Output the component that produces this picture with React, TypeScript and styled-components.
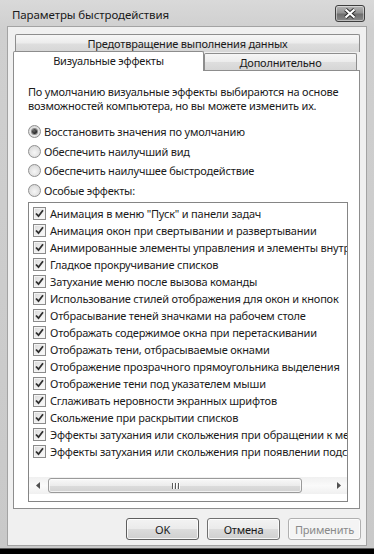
import * as React from 'react';
import styled, { createGlobalStyle } from 'styled-components';

const GlobalStyle = createGlobalStyle`
  html, body {
    margin: 0;
    padding: 0;
    background: #000;
  }
  body {
    font-family: "Noto Sans", "DejaVu Sans", sans-serif;
    font-size: 11px;
    letter-spacing: -0.2px;
    color: #1b1b1b;
  }
`;

const Window = styled.div`
  width: 374px;
  height: 549px;
  box-sizing: border-box;
  display: flex;
  flex-direction: column;
  padding: 0 7px 2px;
  background: linear-gradient(to bottom, #d9d9d9 0px, #cfcfcf 30px, #c9c9c9 100%);
  border-bottom: 1px solid #5a5a5a;
`;

const TitleBar = styled.div`
  height: 26px;
  display: flex;
  align-items: center;
  justify-content: space-between;
  padding: 0 2px 0 5px;
`;

const Title = styled.span`
  font-size: 11.5px;
  letter-spacing: -0.1px;
  color: #1a1a1a;
  margin-top: 2px;
`;

const CloseButton = styled.div`
  width: 30px;
  height: 17px;
  box-sizing: border-box;
  margin-top: 1px;
  border: 1px solid #3f3f3f;
  border-radius: 3px;
  display: flex;
  align-items: center;
  justify-content: center;
  background: linear-gradient(to bottom, #b5b5b5 0%, #939393 45%, #6e6e6e 55%, #8a8a8a 100%);
  box-shadow: inset 0 0 0 1px rgba(255, 255, 255, 0.45);
`;

const Client = styled.div`
  flex: 1;
  display: flex;
  flex-direction: column;
  background: #f0f0f0;
  border: 1px solid #a3a3a3;
  padding: 7px 5px 0;
`;

const BackRow = styled.div`
  display: flex;
  padding-left: 2px;
`;

const FrontRow = styled.div`
  display: flex;
  align-items: flex-end;
  height: 19px;
  margin-top: -1px;
`;

const Tab = styled.div<{ $width: number; $active?: boolean; $height: number }>`
  width: ${(p) => p.$width}px;
  height: ${(p) => p.$height}px;
  box-sizing: border-box;
  display: flex;
  align-items: center;
  justify-content: center;
  border: 1px solid #8d8d8d;
  border-bottom: none;
  border-radius: 2px 2px 0 0;
  color: #1a1a1a;
  white-space: nowrap;
  position: relative;
  z-index: ${(p) => (p.$active ? 2 : 0)};
  margin-bottom: ${(p) => (p.$active ? -1 : 0)}px;
  padding-bottom: ${(p) => (p.$active ? 3 : 0)}px;
  background: ${(p) =>
    p.$active
      ? '#ffffff'
      : 'linear-gradient(to bottom, #f6f6f6 0%, #ececec 48%, #dedede 52%, #d6d6d6 100%)'};
`;

const Panel = styled.div`
  width: 347px;
  box-sizing: border-box;
  border: 1px solid #8d8d8d;
  background: #fff;
  padding: 14px 0 6px 14px;
  position: relative;
  z-index: 1;
`;

const Intro = styled.p`
  margin: 0;
  line-height: 14px;
  width: 325px;
`;

const RadioGroup = styled.div`
  margin-top: 9px;
  display: flex;
  flex-direction: column;
`;

const RadioRow = styled.label`
  height: 19.5px;
  display: flex;
  align-items: center;
  gap: 3px;
  white-space: nowrap;
`;

const RadioDot = styled.span<{ $checked?: boolean }>`
  width: 13px;
  height: 13px;
  box-sizing: border-box;
  border-radius: 50%;
  border: 1px solid #909090;
  background: radial-gradient(circle at 50% 60%, #f6f6f6 0%, #e2e2e2 55%, #cfcfcf 100%);
  display: flex;
  align-items: center;
  justify-content: center;
  &::after {
    content: '';
    display: ${(p) => (p.$checked ? 'block' : 'none')};
    width: 5px;
    height: 5px;
    border-radius: 50%;
    background: radial-gradient(circle at 40% 35%, #6a6a6a 0%, #222 70%, #111 100%);
    box-shadow: 0 0 0 1px #8a8a8a;
  }
`;

const ListBox = styled.div`
  margin-top: 2px;
  width: 320px;
  height: 300px;
  box-sizing: border-box;
  border: 1px solid #858585;
  background: #fff;
  display: flex;
  flex-direction: column;
  padding-bottom: 7px;
`;

const ItemList = styled.div`
  flex: 1;
  overflow: hidden;
  padding-top: 2px;
`;

const Item = styled.label`
  height: 17px;
  display: flex;
  align-items: center;
  gap: 4px;
  padding-left: 4px;
  white-space: nowrap;
`;

const Box = styled.span`
  flex: none;
  width: 13px;
  height: 13px;
  box-sizing: border-box;
  border: 1px solid #8b8b8b;
  background: linear-gradient(135deg, #d9d9d9 0%, #f3f3f3 70%, #fbfbfb 100%);
  box-shadow: inset 0 0 0 1px #f4f4f4;
  display: flex;
  align-items: center;
  justify-content: center;
`;

const ScrollBar = styled.div`
  height: 17px;
  display: flex;
  align-items: center;
  background: linear-gradient(to bottom, #f0f0f0, #fafafa 50%, #f0f0f0);
`;

const Arrow = styled.div`
  width: 17px;
  height: 17px;
  flex: none;
  display: flex;
  align-items: center;
  justify-content: center;
`;

const Track = styled.div`
  flex: 1;
  height: 17px;
  display: flex;
  align-items: center;
  padding: 0 2px;
`;

const Thumb = styled.div`
  width: 254px;
  height: 15px;
  box-sizing: border-box;
  border: 1px solid #9a9a9a;
  border-radius: 3px;
  background: linear-gradient(to bottom, #f8f8f8 0%, #ececec 50%, #dcdcdc 51%, #d2d2d2 100%);
  box-shadow: inset 0 0 0 1px rgba(255, 255, 255, 0.7);
  display: flex;
  align-items: center;
  justify-content: center;
  gap: 2px;
`;

const Grip = styled.span`
  width: 1px;
  height: 6px;
  background: #5a5a5a;
  box-shadow: 1px 0 0 #fff;
`;

const ButtonRow = styled.div`
  display: flex;
  justify-content: flex-end;
  gap: 8px;
  margin-top: 9px;
  padding-right: 0;
`;

const Button = styled.div<{ $disabled?: boolean; $default?: boolean }>`
  width: 73px;
  height: 22px;
  box-sizing: border-box;
  display: flex;
  align-items: center;
  justify-content: center;
  border-radius: 3px;
  border: 1px solid ${(p) => (p.$disabled ? '#b0b0b0' : p.$default ? '#5e5e5e' : '#707070')};
  color: ${(p) => (p.$disabled ? '#8a8a8a' : '#1a1a1a')};
  background: ${(p) =>
    p.$disabled
      ? '#f4f4f4'
      : 'linear-gradient(to bottom, #f3f3f3 0%, #ebebeb 48%, #dcdcdc 52%, #cfcfcf 100%)'};
  box-shadow: inset 0 0 0 1px ${(p) => (p.$disabled ? '#fbfbfb' : 'rgba(255,255,255,0.8)')};
`;

const items = [
  'Анимация в меню "Пуск" и панели задач',
  'Анимация окон при свертывании и развертывании',
  'Анимированные элементы управления и элементы внутри окна',
  'Гладкое прокручивание списков',
  'Затухание меню после вызова команды',
  'Использование стилей отображения для окон и кнопок',
  'Отбрасывание теней значками на рабочем столе',
  'Отображать содержимое окна при перетаскивании',
  'Отображать тени, отбрасываемые окнами',
  'Отображение прозрачного прямоугольника выделения',
  'Отображение тени под указателем мыши',
  'Сглаживать неровности экранных шрифтов',
  'Скольжение при раскрытии списков',
  'Эффекты затухания или скольжения при обращении к меню',
  'Эффекты затухания или скольжения при появлении подсказок',
];

const radios = [
  'Восстановить значения по умолчанию',
  'Обеспечить наилучший вид',
  'Обеспечить наилучшее быстродействие',
  'Особые эффекты:',
];

const Check = () => (
  <svg width="9" height="9" viewBox="0 0 9 9">
    <path d="M1 4.5 L3.5 7.2 L8 1.2" fill="none" stroke="#2e2e2e" strokeWidth="1.8" />
  </svg>
);

export default function App() {
  return (
    <>
      <GlobalStyle />
      <Window>
        <TitleBar>
          <Title>Параметры быстродействия</Title>
          <CloseButton>
            <svg width="14" height="11" viewBox="0 0 14 11">
              <path d="M2.5 1.5 L11.5 9.5 M11.5 1.5 L2.5 9.5" stroke="#2a2a2a" strokeWidth="4" />
              <path d="M2.5 1.5 L11.5 9.5 M11.5 1.5 L2.5 9.5" stroke="#ffffff" strokeWidth="2.2" />
            </svg>
          </CloseButton>
        </TitleBar>
        <Client>
          <BackRow>
            <Tab $width={345} $height={18}>Предотвращение выполнения данных</Tab>
          </BackRow>
          <FrontRow>
            <Tab $width={191} $height={20} $active>Визуальные эффекты</Tab>
            <Tab $width={153} $height={17}>Дополнительно</Tab>
          </FrontRow>
          <Panel>
            <Intro>
              По умолчанию визуальные эффекты выбираются на основе возможностей компьютера, но вы можете изменить их.
            </Intro>
            <RadioGroup>
              {radios.map((r, i) => (
                <RadioRow key={r}>
                  <RadioDot $checked={i === 0} />
                  {r}
                </RadioRow>
              ))}
            </RadioGroup>
            <ListBox>
              <ItemList>
                {items.map((t) => (
                  <Item key={t}>
                    <Box>
                      <Check />
                    </Box>
                    {t}
                  </Item>
                ))}
              </ItemList>
              <ScrollBar>
                <Arrow>
                  <svg width="4" height="7" viewBox="0 0 4 7">
                    <path d="M4 0 L0 3.5 L4 7 Z" fill="#505050" />
                  </svg>
                </Arrow>
                <Track>
                  <Thumb>
                    <Grip />
                    <Grip />
                    <Grip />
                  </Thumb>
                </Track>
                <Arrow>
                  <svg width="4" height="7" viewBox="0 0 4 7">
                    <path d="M0 0 L4 3.5 L0 7 Z" fill="#505050" />
                  </svg>
                </Arrow>
              </ScrollBar>
            </ListBox>
          </Panel>
          <ButtonRow>
            <Button $default>OK</Button>
            <Button>Отмена</Button>
            <Button $disabled>Применить</Button>
          </ButtonRow>
        </Client>
      </Window>
    </>
  );
}
